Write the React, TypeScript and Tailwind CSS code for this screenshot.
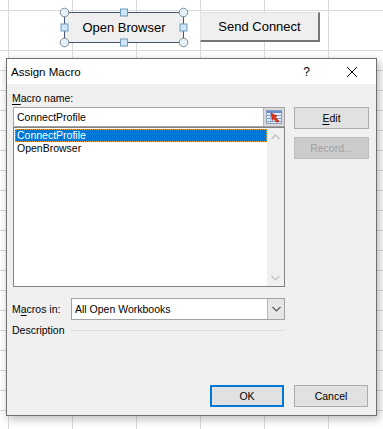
import React from "react";

const rowHeights = [
  "h-[11px]",
  "h-[40px]",
  "h-[20px]", "h-[20px]", "h-[20px]", "h-[20px]", "h-[20px]", "h-[20px]", "h-[20px]",
  "h-[20px]", "h-[20px]", "h-[20px]", "h-[20px]", "h-[20px]", "h-[20px]", "h-[20px]",
  "h-[20px]", "h-[20px]", "h-[20px]", "h-[20px]", "h-[20px]",
];

function Sheet() {
  return (
    <div className="flex flex-col">
      {rowHeights.map((h, i) => (
        <div key={i} className={`flex shrink-0 border-b border-[#dadada] ${h}`}>
          <div className="w-[9px] shrink-0 border-r border-[#dadada]" />
          {[0, 1, 2, 3, 4, 5].map((j) => (
            <div key={j} className="w-[64px] shrink-0 border-r border-[#dadada]" />
          ))}
        </div>
      ))}
    </div>
  );
}

function Handles() {
  const circles = [
    [64.5, 12.5],
    [183.5, 12.5],
    [64.5, 42.5],
    [183.5, 42.5],
  ];
  const squares = [
    [124, 12.5],
    [124, 42.5],
    [64.5, 27.5],
    [183.5, 27.5],
  ];
  return (
    <svg className="pointer-events-none absolute left-0 top-0" width="383" height="60">
      <rect x="64.5" y="12.5" width="119" height="30" fill="none" stroke="#44546a" strokeWidth="1" />
      {circles.map(([x, y], i) => (
        <circle key={i} cx={x} cy={y} r="4.3" fill="#e4f1f7" stroke="#7d8c99" strokeWidth="1" />
      ))}
      {squares.map(([x, y], i) => (
        <rect key={i} x={x - 3.5} y={y - 3.5} width="7" height="7" fill="#cfe7f4" stroke="#6a9cc0" strokeWidth="1" />
      ))}
    </svg>
  );
}

function RefEditIcon() {
  return (
    <svg width="16" height="14" viewBox="0 0 16 14">
      <rect x="0.5" y="0.5" width="15" height="13" fill="#e8eef6" stroke="#8aa0c0" />
      <line x1="1" y1="2" x2="15" y2="2" stroke="#3b6cc0" strokeWidth="1.5" />
      <line x1="1" y1="5.5" x2="15" y2="5.5" stroke="#7d9ad0" />
      <line x1="1" y1="8.5" x2="15" y2="8.5" stroke="#7d9ad0" />
      <line x1="1" y1="11.5" x2="15" y2="11.5" stroke="#7d9ad0" />
      <line x1="4.5" y1="3" x2="4.5" y2="13" stroke="#9fb2d4" />
      <polygon points="5,3 11,6 9,7 13,11 11,12.5 7.5,8.5 6.5,10.5" fill="#e0361c" stroke="#a5200c" strokeWidth="0.6" />
    </svg>
  );
}

function ChevronUp() {
  return (
    <svg width="9" height="6" viewBox="0 0 9 6">
      <polyline points="0.5,5 4.5,1 8.5,5" fill="none" stroke="#c2c2c2" strokeWidth="1.4" />
    </svg>
  );
}

function ChevronDown({ color = "#c2c2c2" }: { color?: string }) {
  return (
    <svg width="9" height="6" viewBox="0 0 9 6">
      <polyline points="0.5,1 4.5,5 8.5,1" fill="none" stroke={color} strokeWidth="1.2" />
    </svg>
  );
}

export default function App() {
  return (
    <div className="relative h-[429px] w-[383px] overflow-hidden bg-white font-['Liberation_Sans',Arial,sans-serif] text-black">
      <Sheet />

      {/* Open Browser button (selected) */}
      <div className="absolute left-[64px] top-[12px] flex h-[31px] w-[120px] items-center justify-center bg-[#efefef] text-[13px] text-black">
        Open Browser
      </div>
      <Handles />

      {/* Send Connect button */}
      <div className="absolute left-[200px] top-[12px] flex h-[30px] w-[120px] items-center justify-center border-l border-t border-b-2 border-r-2 border-l-[#e2e2e2] border-t-[#e2e2e2] border-b-[#767676] border-r-[#767676] bg-[#efefef] text-[13px] text-black">
        Send Connect
      </div>

      {/* Dialog */}
      <div className="absolute left-[6px] top-[58px] flex h-[358px] w-[371px] flex-col border border-[#6f6f6f] bg-[#f0f0f0] text-[10.5px] shadow-[2px_3px_9px_rgba(0,0,0,0.28)]">
        {/* Title bar */}
        <div className="flex h-[25px] shrink-0 items-center bg-white pl-[4px]">
          <span className="text-[11.5px] leading-[16px]">Assign Macro</span>
          <span className="ml-auto mr-[37px] text-[12px] leading-[16px]">?</span>
          <svg className="mr-[19px]" width="10" height="10" viewBox="0 0 10 10">
            <line x1="0" y1="0" x2="10" y2="10" stroke="#000" strokeWidth="1" />
            <line x1="10" y1="0" x2="0" y2="10" stroke="#000" strokeWidth="1" />
          </svg>
        </div>

        {/* Body */}
        <div className="flex flex-1 flex-col pl-[5px] pr-[7px] pb-[8px]">
          <div className="flex gap-[9px]">
            {/* left column */}
            <div className="flex w-[273px] flex-col">
              <div className="mt-[6px] h-[16px] leading-[16px]">
                <span className="underline underline-offset-[2px]">M</span>acro name:
              </div>
              <div className="ml-[1px] mt-[1px] flex h-[20px] w-[272px] border border-[#a3a3a3] bg-white">
                <div className="flex flex-1 items-center pl-[3px] leading-[16px]">ConnectProfile</div>
                <div className="flex w-[21px] items-center justify-center border-l border-[#b5b5b5] bg-[#d9d9d9]">
                  <RefEditIcon />
                </div>
              </div>
              <div className="ml-[1px] flex h-[160px] w-[272px] border border-[#828282] bg-white">
                <div className="flex flex-1 flex-col pt-[1px]">
                  <div className="ml-[1px] flex h-[13px] items-center border border-dotted border-[#f5a623] bg-[#0078d7] pl-[1px] leading-[11px] text-white">
                    ConnectProfile
                  </div>
                  <div className="ml-[1px] flex h-[13px] items-center pl-[2px] leading-[13px]">OpenBrowser</div>
                </div>
                <div className="flex w-[17px] flex-col bg-[#f0f0f0]">
                  <div className="flex h-[17px] items-center justify-center">
                    <ChevronUp />
                  </div>
                  <div className="flex-1" />
                  <div className="flex h-[17px] items-center justify-center">
                    <ChevronDown />
                  </div>
                </div>
              </div>
            </div>
            {/* right column */}
            <div className="mt-[23px] flex flex-col gap-[8px]">
              <div className="flex h-[22px] w-[75px] items-center justify-center border border-[#adadad] bg-[#e1e1e1] leading-[16px]">
                <span className="underline underline-offset-[2px]">E</span>dit
              </div>
              <div className="flex h-[22px] w-[75px] items-center justify-center border border-[#bfbfbf] bg-[#cccccc] leading-[16px] text-[#a0a0a0]">
                Record...
              </div>
            </div>
          </div>

          {/* Macros in */}
          <div className="mt-[11px] flex h-[22px] items-center">
            <div className="w-[59px] leading-[16px]">
              M<span className="underline underline-offset-[2px]">a</span>cros in:
            </div>
            <div className="flex h-[22px] w-[214px] border border-[#a3a3a3] bg-white">
              <div className="flex flex-1 items-center pl-[3px] leading-[16px]">All Open Workbooks</div>
              <div className="flex w-[17px] items-center justify-center border-l border-[#b8b8b8] bg-[#e6e6e6]">
                <ChevronDown color="#5a5a5a" />
              </div>
            </div>
          </div>

          {/* Description */}
          <div className="mt-[2px] flex h-[16px] items-center">
            <div className="w-[59px] leading-[16px]">Description</div>
            <div className="h-px w-[214px] bg-[#dcdcdc]" />
          </div>

          <div className="flex-1" />

          {/* Buttons */}
          <div className="flex justify-end gap-[10px] pr-[1px]">
            <div className="flex h-[22px] w-[74px] items-center justify-center border-2 border-[#0078d7] bg-[#e1e1e1] leading-[16px]">
              OK
            </div>
            <div className="flex h-[22px] w-[74px] items-center justify-center border border-[#adadad] bg-[#e1e1e1] leading-[16px]">
              Cancel
            </div>
          </div>
        </div>
      </div>
    </div>
  );
}
